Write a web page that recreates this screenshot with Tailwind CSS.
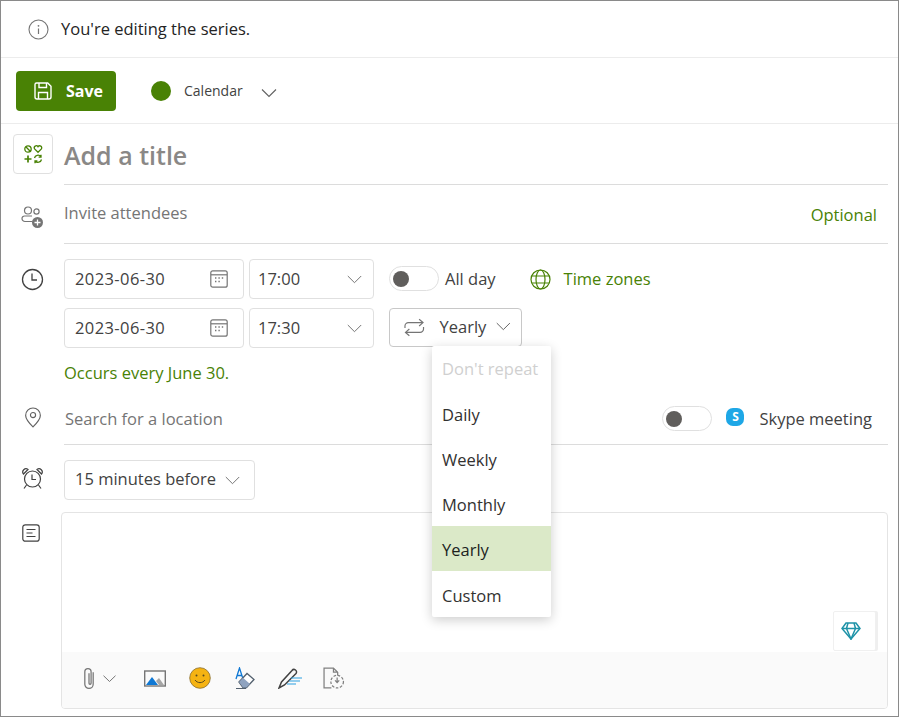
<!DOCTYPE html>
<html><head><meta charset="utf-8"><script src="https://cdn.jsdelivr.net/npm/@tailwindcss/browser@4"></script></head>
<body class="bg-white">
<div class="w-[899px] h-[717px] box-border border border-[#8a8a8a] overflow-hidden font-['Open_Sans','Noto_Sans',sans-serif] text-[16.5px] text-[#424242] flex flex-col">
  <!-- banner -->
  <div class="h-[57px] shrink-0 border-b border-[#ececec] flex items-center pl-[27px] gap-[12px] text-[#242424]">
    <svg class="w-[21px] h-[21px]" viewBox="0 0 21 21" fill="none"><circle cx="10.5" cy="10.5" r="9.5" stroke="#757575" stroke-width="1.1"/><path d="M10.5 9.5v5.5" stroke="#757575" stroke-width="1.2"/><circle cx="10.5" cy="6.8" r=".9" fill="#757575"/></svg>
    <span>You're editing the series.</span>
  </div>
  <!-- toolbar -->
  <div class="h-[66px] shrink-0 border-b border-[#ececec] flex items-center pl-[15px]">
    <button class="w-[100px] h-[40px] bg-[#498205] rounded-[4px] flex items-center pl-[17px] gap-[13px] text-white font-bold text-[16px]">
      <svg class="w-[20px] h-[20px]" viewBox="0 0 20 20" fill="none" stroke="#fff" stroke-width="1.4"><path d="M3.5 2h11.2L18 5.3V16a2 2 0 0 1-2 2H4a2 2 0 0 1-2-2V3.5A1.5 1.5 0 0 1 3.5 2z"/><path d="M6 2v4.5h7.5V2M5.5 18v-6.5h9V18"/></svg>
      <span>Save</span>
    </button>
    <span class="w-[20px] h-[20px] rounded-full bg-[#498205] ml-[35px]"></span>
    <span class="ml-[13px] text-[14px] text-[#424242]">Calendar</span>
    <svg class="w-[16px] h-[10px] ml-[18px] mt-[4px]" viewBox="0 0 16 10" fill="none" stroke="#616161" stroke-width="1.1"><path d="M1 1.5l7 7 7-7"/></svg>
  </div>
  <div class="flex-1 flex flex-col pr-[10px]">
    <!-- title -->
    <div class="flex pt-[10px] pl-[12px]">
      <div class="w-[40px] h-[40px] shrink-0 border border-[#e0e0e0] rounded-[4px] flex items-center justify-center">
        <svg class="w-[20px] h-[20px]" viewBox="0 0 20 20" fill="none" stroke="#498205" stroke-width="1.3"><circle cx="5" cy="5" r="3.2"/><path d="M2.8 2.8l4.4 4.4"/><path d="M15 8.3l-3.4-3.4a2 2 0 0 1 3.4-2.2 2 2 0 0 1 3.4 2.2z"/><path d="M5 11.5v7M1.500 15h7" stroke-width="1.700"/><path d="M11.500 14a3.600 3.600 0 0 1 6.300-1.500M18.500 15.500a3.600 3.600 0 0 1-6.300 1.500M18 10.800v2.400h-2.400M12 19.200v-2.400h2.400"/></svg>
      </div>
      <div class="flex-1 ml-[11px] h-[51px] border-b border-[#dcdcdc] flex items-start pt-[2px] text-[25px] font-semibold text-[#8a8886] leading-[38px]">Add a title</div>
    </div>
    <!-- invite -->
    <div class="flex">
      <div class="w-[63px] shrink-0 flex justify-center pt-[21px]">
        <svg class="w-[23px] h-[23px]" viewBox="0 0 23 23" fill="none" stroke="#757575" stroke-width="1.2"><circle cx="7" cy="4.5" r="3.5"/><circle cx="15.5" cy="5.500" r="2.600"/><path d="M11.500 15.500H4a3 3 0 0 1-3-3 2.500 2.500 0 0 1 2.500-2.500H11"/><circle cx="16.500" cy="16.500" r="5.500" fill="#757575" stroke="none"/><path d="M16.500 13.500v6M13.500 16.500h6" stroke="#fff" stroke-width="1.300"/></svg>
      </div>
      <div class="flex-1 h-[59px] border-b border-[#dcdcdc] flex items-start justify-between pt-[15px] text-[#757575] leading-[26px]">
        <span>Invite attendees</span>
        <span class="text-[#498205] mr-[11px] mt-[2px]">Optional</span>
      </div>
    </div>
    <!-- dates -->
    <div class="flex mt-[15px]">
      <div class="w-[63px] shrink-0 flex justify-center pt-[9px]">
        <svg class="w-[23px] h-[23px]" viewBox="0 0 23 23" fill="none" stroke="#424242" stroke-width="1.3"><circle cx="11.5" cy="11.5" r="10"/><path d="M11 5.5v6.5h5"/></svg>
      </div>
      <div class="flex flex-col">
        <div class="flex items-center h-[40px] gap-[5px]">
          <div class="w-[180px] h-[40px] border border-[#e0e0e0] rounded-[4px] flex items-center justify-between pl-[10px] pr-[15px]"><span class="tracking-[0.4px]">2023-06-30</span>
            <svg class="w-[18px] h-[18px]" viewBox="0 0 18 18" fill="none" stroke="#757575" stroke-width="1.2"><rect x=".8" y=".8" width="16.4" height="16.4" rx="2"/><path d="M1 4.8h16"/><path d="M5 8h1.4M8.4 8h1.4M11.8 8h1.4M5 11.5h1.4M8.4 11.500h1.400" stroke-width="1.600"/></svg></div>
          <div class="w-[125px] h-[40px] border border-[#e0e0e0] rounded-[4px] flex items-center justify-between pl-[8px] pr-[11px]"><span>17:00</span>
            <svg class="w-[15px] h-[9px]" viewBox="0 0 15 9" fill="none" stroke="#757575" stroke-width="1"><path d="M.8 1l6.700 6.700L14.200 1"/></svg></div>
          <div class="ml-[10px] -mt-px w-[50px] h-[25px] border border-[#e0e0e0] rounded-full flex items-center pl-[3px]"><span class="w-[16px] h-[16px] rounded-full bg-[#605e5c]"></span></div>
          <span class="ml-[1px]">All day</span>
          <svg class="w-[21px] h-[21px] ml-[29px]" viewBox="0 0 21 21" fill="none" stroke="#498205" stroke-width="1.200"><circle cx="10.500" cy="10.500" r="9.500"/><ellipse cx="10.500" cy="10.500" rx="4.500" ry="9.500"/><path d="M2 7h17M2 14h17"/></svg>
          <span class="ml-[8px] text-[#498205]">Time zones</span>
        </div>
        <div class="flex items-start h-[40px] gap-[5px] mt-[9px]">
          <div class="w-[180px] h-[40px] border border-[#e0e0e0] rounded-[4px] flex items-center justify-between pl-[10px] pr-[15px]"><span class="tracking-[0.4px]">2023-06-30</span>
            <svg class="w-[18px] h-[18px]" viewBox="0 0 18 18" fill="none" stroke="#757575" stroke-width="1.200"><rect x=".8" y=".8" width="16.400" height="16.400" rx="2"/><path d="M1 4.800h16"/><path d="M5 8h1.400M8.400 8h1.400M11.800 8h1.400M5 11.500h1.400M8.400 11.500h1.400" stroke-width="1.600"/></svg></div>
          <div class="w-[125px] h-[40px] border border-[#e0e0e0] rounded-[4px] flex items-center justify-between pl-[8px] pr-[11px]"><span>17:30</span>
            <svg class="w-[15px] h-[9px]" viewBox="0 0 15 9" fill="none" stroke="#757575" stroke-width="1"><path d="M.8 1l6.700 6.700L14.200 1"/></svg></div>
          <div class="relative ml-[10px] w-[133px] h-[39px] border border-[#c8c8c8] rounded-[4px] flex items-center pl-[14px] pr-[10px]">
            <svg class="w-[21px] h-[19px]" viewBox="0 0 21 19" fill="none" stroke="#757575" stroke-width="1.200"><path d="M1 10V8a3.500 3.500 0 0 1 3.500-3.500H19M15.500 1L19.500 4.500 15.500 8"/><path d="M20 9v2a3.500 3.500 0 0 1-3.500 3.500H2M5.500 11L1.500 14.500 5.500 18"/></svg>
            <span class="ml-[15px]">Yearly</span>
            <svg class="w-[15px] h-[9px] ml-[10px] -mt-[3px]" viewBox="0 0 15 9" fill="none" stroke="#616161" stroke-width="1"><path d="M.8 1l6.700 6.700L14.200 1"/></svg>
            <!-- dropdown -->
            <div class="absolute left-[42px] top-[37px] w-[119px] h-[271px] bg-white rounded-[2px] shadow-[0_3px_12px_rgba(0,0,0,0.2)] z-10 flex flex-col text-[#323130]">
              <div class="h-[45px] flex items-center pl-[10px] pt-[2px] text-[#d0d0d0]">Don't repeat</div>
              <div class="h-[45px] flex items-center pl-[10px] pt-[3px]">Daily</div>
              <div class="h-[45px] flex items-center pl-[10px] pt-[3px]">Weekly</div>
              <div class="h-[45px] flex items-center pl-[10px] pt-[3px]">Monthly</div>
              <div class="h-[45px] flex items-center pl-[10px] pt-[3px] bg-[#dbe9c8] text-[#201f1e]">Yearly</div>
              <div class="h-[46px] flex items-center pl-[10px] pt-[4px]">Custom</div>
            </div>
          </div>
        </div>
      </div>
    </div>
    <div class="pl-[63px] mt-[13px] h-[24px] leading-[24px] text-[#498205]">Occurs every June 30.</div>
    <!-- location -->
    <div class="flex">
      <div class="w-[63px] shrink-0 flex justify-center pt-[22px]">
        <svg class="w-[18px] h-[21px]" viewBox="0 0 18 22" fill="none" stroke="#616161" stroke-width="1.200"><path d="M9 20.800C5 16.800 1.300 13 1.300 8.800a7.700 7.700 0 0 1 15.400 0c0 4.200-3.700 8-7.700 12z"/><circle cx="9" cy="8.500" r="2.700"/></svg>
      </div>
      <div class="flex-1 h-[60px] border-b border-[#dcdcdc] flex items-start pt-[8px] leading-[26px]">
        <span class="text-[#757575] ml-[1px] mt-[13px]">Search for a location</span>
        <div class="ml-auto flex items-center h-[25px] mt-[13px]">
          <div class="w-[50px] h-[25px] border border-[#e0e0e0] rounded-full flex items-center pl-[3px]"><span class="w-[16px] h-[16px] rounded-full bg-[#605e5c]"></span></div>
          <span class="ml-[14px] w-[18px] h-[18px] rounded-[7px] bg-[#1ea7e6] -mt-[3px] flex items-center justify-center text-white text-[12px] font-bold leading-none">S</span>
          <span class="ml-[15px] mr-[16px]">Skype meeting</span>
        </div>
      </div>
    </div>
    <!-- reminder -->
    <div class="flex mt-[15px]">
      <div class="w-[63px] shrink-0 flex justify-center pt-[8px]">
        <svg class="w-[21px] h-[22px]" viewBox="0 0 21 22" fill="none" stroke="#424242" stroke-width="1.200"><circle cx="10.500" cy="11" r="8"/><path d="M10 6.500v5h4"/><path d="M1.500 6a3.200 3.200 0 0 1 4.500-4.500zM19.500 6A3.200 3.200 0 0 0 15 1.500zM4.500 17L2 20.500M16.500 17l2.500 3.500"/></svg>
      </div>
      <div class="w-[191px] h-[40px] border border-[#e0e0e0] rounded-[4px] flex items-center justify-between pl-[10px] pr-[14px]"><span class="-mt-[2px]">15 minutes before</span>
        <svg class="w-[15px] h-[9px]" viewBox="0 0 15 9" fill="none" stroke="#757575" stroke-width="1"><path d="M.8 1l6.700 6.700L14.200 1"/></svg></div>
    </div>
    <!-- body -->
    <div class="flex mt-[12px]">
      <div class="w-[60px] shrink-0 flex justify-center pt-[12px]">
        <svg class="w-[18px] h-[18px]" viewBox="0 0 18 18" fill="none" stroke="#424242" stroke-width="1.200"><rect x=".8" y=".8" width="16.400" height="16.400" rx="2.500"/><path d="M4.500 5.500h9M4.500 9h6M4.500 12.500h9"/></svg>
      </div>
      <div class="flex-1 h-[197px] border border-[#e4e4e4] rounded-[4px] flex flex-col overflow-hidden relative">
        <div class="flex-1"></div>
        <div class="absolute right-[11px] top-[98px] w-[43px] h-[40px] bg-white border border-[#f0f0f0] rounded-[2px] shadow-[2px_0_0_#efefef] flex items-center justify-center">
          <svg class="w-[20px] h-[18px] mr-[8px]" viewBox="0 0 20 18" fill="none" stroke="#1f93a8" stroke-width="1.500"><path d="M5 1h10l4 5.500L10 17 1 6.500z"/><path d="M1 6.500h18M7 1L5.500 6.500 10 17l4.500-10.500L13 1"/></svg>
        </div>
        <div class="h-[56px] bg-[#fafafa] flex items-center pl-[20px] pb-[4px]">
          <svg class="w-[14px] h-[23px]" viewBox="0 0 13 22" fill="none" stroke="#757575" stroke-width="1.200"><path d="M10.500 5v11.500a4 4 0 0 1-8 0V4.500a3 3 0 0 1 6 0v11a1 1 0 0 1-2 0V6"/></svg>
          <svg class="w-[13px] h-[7px] ml-[7px]" viewBox="0 0 13 7" fill="none" stroke="#757575" stroke-width="1"><path d="M.5.700L6.500 6.500 12.500.7"/></svg>
          <svg class="w-[22px] h-[17px] ml-[28px]" viewBox="0 0 22 17" fill="none"><rect x=".7" y="1" width="20.600" height="15" stroke="#757575" stroke-width="1.400"/><path d="M2 15l6-8 6 8z" fill="#0f78d4"/><path d="M12 11l3-3 5 7h-5z" fill="#a6a6a6"/></svg>
          <svg class="w-[22px] h-[22px] ml-[23px]" viewBox="0 0 22 22"><circle cx="11" cy="11" r="10.300" fill="#f5b312" stroke="#8a6d2a" stroke-width=".8"/><circle cx="7.500" cy="8.500" r="1" fill="#594a1e"/><circle cx="14.500" cy="8.500" r="1" fill="#594a1e"/><path d="M6 13c2.500 3.500 7.500 3.500 10 0" fill="none" stroke="#594a1e" stroke-width="1"/></svg>
          <svg class="w-[20px] h-[22px] ml-[24px]" viewBox="0 0 20 22" fill="none"><path d="M1 12L4.500 1 8 12M2.200 8.500h4.600" stroke="#0f78d4" stroke-width="1.300"/><path d="M4 15L12 6.500l7 6-7.500 8H8z" fill="#fff" stroke="#53606e" stroke-width="1.300"/><path d="M4 15l4-4.300 7 6.200-3.500 3.600H8z" fill="#8fa3c0"/><path d="M1 21.500h10" stroke="#53606e" stroke-width="1"/></svg>
          <svg class="w-[24px] h-[21px] ml-[23px]" viewBox="0 0 24 21" fill="none"><path d="M1 20l2.500-6L14 2.500a2.500 2.500 0 0 1 4 3L6.500 17z" stroke="#424242" stroke-width="1.500"/><path d="M13 10h11M11 13h11M9 16h9" stroke="#2b9fe0" stroke-width="1"/></svg>
          <svg class="w-[22px] h-[22px] ml-[21px]" viewBox="0 0 21 21" fill="none" stroke="#808080" stroke-width="1.200"><path d="M8 20H1V1h9l4 4v3M10 1v4h4"/><circle cx="13.500" cy="14" r="6" stroke-dasharray="2.500 1.500"/><path d="M13.500 10v4.500M11.500 12.800l2 2 2-2"/></svg>
        </div>
      </div>
    </div>
  </div>
</div>
</body></html>
